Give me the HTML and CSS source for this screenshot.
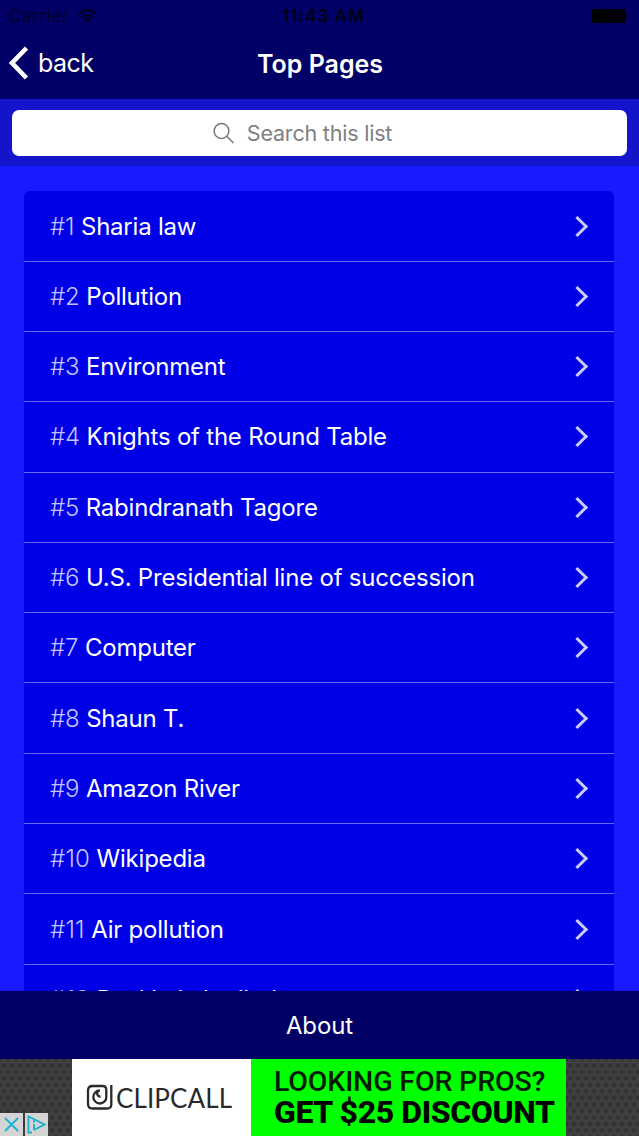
FILE: index.html
```html
<!DOCTYPE html>
<html lang="en">
<head>
<meta charset="utf-8">
<title>Top Pages</title>
<link rel="stylesheet" href="styles.css">
</head>
<body>
<div class="app">
  <header class="header">
    <div class="status">
      <span class="carrier">Carrier</span>
      <svg class="wifi" viewBox="0 0 20 14" width="20" height="14"><g fill="none" stroke="#000028" stroke-width="2.6"><path d="M1 5Q10 -2.5 19 5"/><path d="M4.5 8.5Q10 4 15.5 8.5"/></g><path d="M7 10.5Q10 8 13 10.5L10 14Z" fill="#000014"/></svg>
      <span class="clock">11:43 AM</span>
      <svg class="battery" viewBox="0 0 39 14" width="39" height="14"><rect x="1" width="34" height="14" rx="2"/><path d="M36.500 5q2.500 2 0 4z" fill="#000028"/></svg>
    </div>
    <nav class="nav">
      <a class="back"><svg viewBox="0 0 20 34" width="20" height="34"><path d="M18.500 2L4 17L18.500 32" fill="none" stroke="#fff" stroke-width="4.600"/></svg><span>back</span></a>
      <h1 class="title">Top Pages</h1>
    </nav>
  </header>
  <div class="searchbar">
    <div class="search">
      <svg viewBox="0 0 22 22" width="22" height="22"><g fill="none" stroke="#77777b" stroke-width="1.500"><circle cx="8.500" cy="9" r="7.400"/><path d="M13.700 14.200L20.500 21"/></g></svg>
      <span>Search this list</span>
    </div>
  </div>
  <main class="content">
    <ul class="list">
      <li class="row"><span class="rank">#1</span><span class="name">Sharia law</span><i class="chevron"></i></li>
      <li class="row"><span class="rank">#2</span><span class="name">Pollution</span><i class="chevron"></i></li>
      <li class="row"><span class="rank">#3</span><span class="name">Environment</span><i class="chevron"></i></li>
      <li class="row"><span class="rank">#4</span><span class="name">Knights of the Round Table</span><i class="chevron"></i></li>
      <li class="row"><span class="rank">#5</span><span class="name">Rabindranath Tagore</span><i class="chevron"></i></li>
      <li class="row"><span class="rank">#6</span><span class="name">U.S. Presidential line of succession</span><i class="chevron"></i></li>
      <li class="row"><span class="rank">#7</span><span class="name">Computer</span><i class="chevron"></i></li>
      <li class="row"><span class="rank">#8</span><span class="name">Shaun T.</span><i class="chevron"></i></li>
      <li class="row"><span class="rank">#9</span><span class="name">Amazon River</span><i class="chevron"></i></li>
      <li class="row"><span class="rank wide">#10</span><span class="name">Wikipedia</span><i class="chevron"></i></li>
      <li class="row"><span class="rank wide">#11</span><span class="name">Air pollution</span><i class="chevron"></i></li>
      <li class="row"><span class="rank wide">#12</span><span class="name">Rani Lakshmibai</span><i class="chevron"></i></li>
    </ul>
  </main>
  <footer class="about">About</footer>
  <aside class="ad">
    <div class="mesh"><div class="adchoices">
      <svg viewBox="0 0 23 23" width="23" height="23"><path d="M5 5L18 18M18 5L5 18" fill="none" stroke="#19b3cd" stroke-width="1.800"/></svg>
      <svg viewBox="0 0 23 23" width="23" height="23"><path d="M7 19.500H3.500V3.500L19.500 11.500L9 17M9 7.500v2M9 11v6" fill="none" stroke="#19b3cd" stroke-width="1.900"/></svg>
    </div></div>
    <div class="brand">
      <svg viewBox="0 0 27 26" width="27" height="26"><path d="M25.300 1V20.500Q25.300 24.500 21 24.500H6.500Q2 24.500 2 20V6.500Q2 2 6.500 2H16.500Q20.300 2 20.300 6V12.500A6.500 6.500 0 1 1 13.800 6.500M14.500 12.500A2.500 2.500 0 0 1 13.800 6.500" fill="none" stroke="#29292c" stroke-width="2.300"/></svg>
      <span class="wordmark">CLIPCALL</span>
    </div>
    <div class="offer"><span class="line1">LOOKING FOR PROS?</span><span class="line2">GET $25 DISCOUNT</span></div>
    <div class="mesh"></div>
  </aside>
</div>
</body>
</html>
```
FILE: styles.css
```css
* { box-sizing: border-box; }
body { margin: 0; font-family: Inter, "Liberation Sans", sans-serif; }
.app { width: 639px; height: 1136px; display: flex; flex-direction: column; overflow: hidden; background: #1a1aff; }
.header { height: 99px; flex: none; background: #000066; }
.status { height: 32px; display: grid; grid-template-columns: 68px 205px 1fr auto; align-items: center; padding: 0 9px; color: #000028; font-size: 17px; }
.carrier { letter-spacing: 0.6px; }
.clock { font-weight: 600; color: #000014; letter-spacing: 1.1px; }
.nav { height: 64px; display: grid; grid-template-columns: 200px 240px 199px; align-items: center; color: #fff; }
.back { display: flex; align-items: center; gap: 10px; padding: 0 0 3px 8px; font-size: 25px; line-height: 30px; letter-spacing: -0.5px; }
.title { margin: 0; font-size: 25px; font-weight: 600; text-align: center; }
.searchbar { height: 67px; flex: none; padding: 11px 12px 10px; background: #1414cb; }
.search { height: 46px; border-radius: 7px; background: #fff; display: flex; align-items: center; justify-content: center; gap: 12px; padding-right: 34px; color: #808084; font-size: 21.500px; letter-spacing: -0.2px; }
.content { flex: 1; min-height: 0; overflow: hidden; padding: 25.400px 25px 0 24px; }
.list { list-style: none; margin: 0; padding: 0; background: #0000e6; border-radius: 6px; }
.row { height: 70.300px; display: flex; align-items: center; padding: 0 26px; color: #fff; font-size: 24px; letter-spacing: -0.22px; border-bottom: 1px solid #6666f0; white-space: nowrap; }
.rank { color: #c4c4f9; font-weight: 350; margin-right: 6.500px; letter-spacing: -0.1px; }
.rank.wide { letter-spacing: 0.200px; }
.name { flex: 1; }
.chevron { width: 15px; height: 15px; border: solid #ccccfa; border-width: 3px 3px 0 0; transform: rotate(45deg); margin-right: 3px; }
.about { height: 68px; flex: none; background: #000066; color: #fff; font-size: 24px; letter-spacing: -0.1px; display: flex; align-items: center; justify-content: center; }
.ad { height: 77px; flex: none; display: grid; grid-template-columns: 72px 179px 315px 73px; }
.mesh { background-color: #403f40; background-image: radial-gradient(circle, #323234 1.500px, transparent 3px), radial-gradient(circle, #323234 1.500px, transparent 3px); background-size: 8px 13px; background-position: 0 0, 4px 6.500px; display: flex; align-items: flex-end; }
.adchoices { display: flex; gap: 2px; }
.adchoices svg { display: block; background: #d4d4d4; }
.brand { background: #fff; display: flex; align-items: center; padding-left: 14px; gap: 3px; color: #29292c; }
.brand svg { margin-bottom: 1px; }
.wordmark { font-family: Lato, sans-serif; font-size: 26px; letter-spacing: 0.1px; }
.offer { background: #00ff00; color: #001a00; font-family: Roboto, sans-serif; padding: 7px 0 0 23px; white-space: nowrap; }
.offer span { display: block; line-height: 31px; }
.line1 { font-size: 28.500px; font-weight: 500; letter-spacing: -0.15px; }
.line2 { font-size: 32px; font-weight: 800; color: #000; letter-spacing: -0.4px; }
```
